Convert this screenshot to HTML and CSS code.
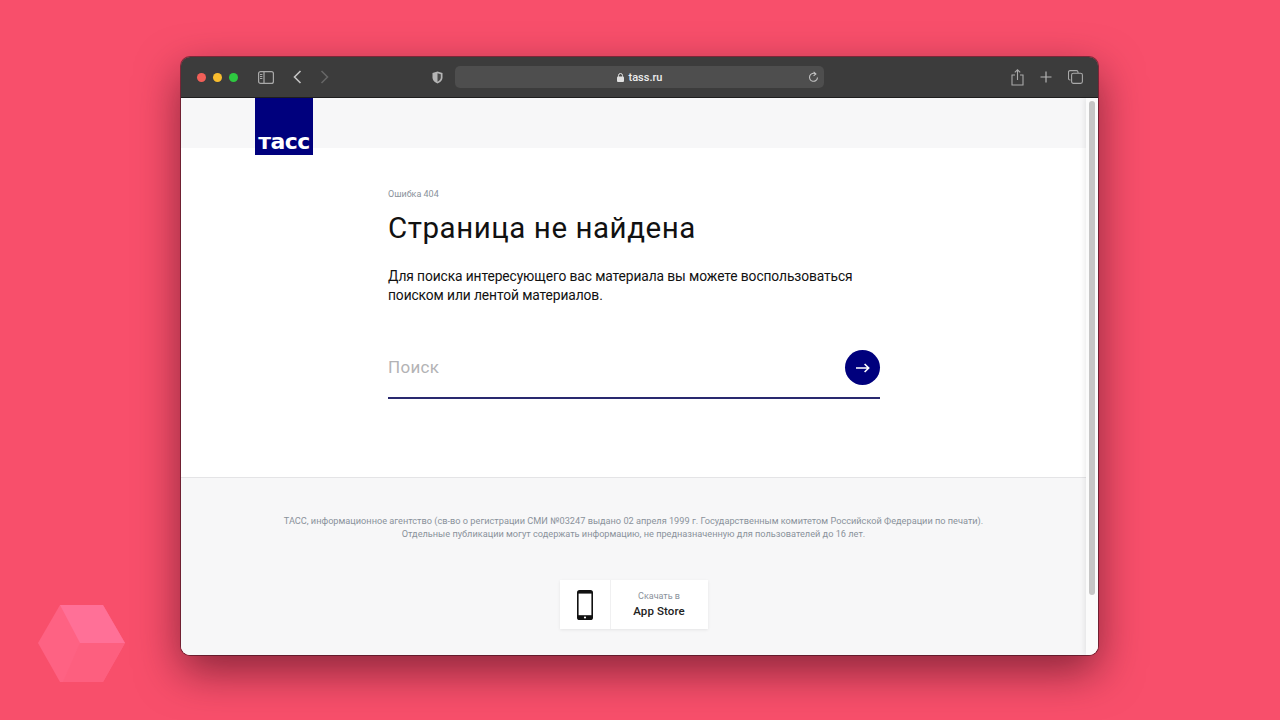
FILE: index.html
```html
<!DOCTYPE html>
<html lang="ru">
<head>
<meta charset="utf-8">
<title>tass.ru</title>
<link rel="stylesheet" href="styles.css">
</head>
<body>
	<!-- watermark -->
	<svg class="cube" width="88" height="78" viewBox="0 0 88 78">
		<polygon points="22,0 65,0 87,38 65,77 22,77 0,38" fill="#fe6283"/>
		<polygon points="22,0 65,0 87,38 42,38" fill="#ff7097"/>
		<polygon points="42,38 87,38 65,77 25,77" fill="#fd5f7f"/>
	</svg>

	<div class="window">
		<div class="toolbar">
			<div class="lights">
				<span class="light red"></span>
				<span class="light yellow"></span>
				<span class="light green"></span>
			</div>
			<svg class="tb_sidebar" width="16" height="13" viewBox="0 0 16 13" fill="none" stroke="#a9a9a9" stroke-width="1.2">
				<rect x="0.6" y="0.6" width="14.8" height="11.8" rx="2"/>
				<path d="M6 0.6V12.4"/>
				<path d="M2 3.5H4.4M2 5.5H4.4M2 7.5H4.4" stroke-width="1"/>
			</svg>
			<svg class="tb_back" width="9" height="14" viewBox="0 0 9 14" fill="none" stroke="#c4c4c4" stroke-width="1.6">
				<path d="M7.5 1L1.5 7L7.5 13"/>
			</svg>
			<svg class="tb_fwd" width="9" height="14" viewBox="0 0 9 14" fill="none" stroke="#666" stroke-width="1.6">
				<path d="M1.5 1L7.5 7L1.5 13"/>
			</svg>
			<svg class="tb_shield" width="11" height="13" viewBox="0 0 11 13">
				<path d="M5.5 0.5L10.5 2V6.5C10.5 9.5 8 11.6 5.5 12.5C3 11.6 0.5 9.5 0.5 6.5V2Z" fill="#b5b5b5"/>
				<path d="M5.5 2.2L8.8 3.2V6.5C8.8 8.5 7.2 10 5.5 10.7Z" fill="#4a4a4a"/>
			</svg>
			<div class="url_bar">
				<div class="url_text">
					<svg width="7" height="9" viewBox="0 0 7 9">
						<rect x="0" y="3.5" width="7" height="5.5" rx="1" fill="#e0e0e0"/>
						<path d="M1.5 3.8V2.5a2 2 0 0 1 4 0V3.8" fill="none" stroke="#e0e0e0"/>
					</svg>
					<span>tass.ru</span>
				</div>
				<svg class="reload" width="11" height="12" viewBox="0 0 11 12" fill="none" stroke="#c0c0c0" stroke-width="1.1">
					<path d="M7.6 2.9A4 4 0 1 0 9.5 6.5"/>
					<path d="M5.6 0.8L7.9 2.9L5.6 4.8"/>
				</svg>
			</div>
			<div class="tb_right">
				<svg width="13" height="17" viewBox="0 0 13 17" fill="none" stroke="#a9a9a9" stroke-width="1.1">
					<path d="M4 6H1V16H12V6H9"/>
					<path d="M6.5 11V1M3.8 3.4L6.5 0.8L9.2 3.4"/>
				</svg>
				<svg width="12" height="12" viewBox="0 0 12 12" stroke="#b5b5b5" stroke-width="1.2">
					<path d="M6 0.5V11.5M0.5 6H11.5"/>
				</svg>
				<svg width="15" height="14" viewBox="0 0 15 14" fill="none" stroke="#a9a9a9" stroke-width="1.1">
					<path d="M2.5 10H2a1.5 1.5 0 0 1-1.5-1.5V2A1.5 1.5 0 0 1 2 0.6H8.5A1.5 1.5 0 0 1 10 2V3"/>
					<rect x="3.6" y="3.2" width="10.8" height="10.2" rx="1.8"/>
				</svg>
			</div>
		</div>

		<div class="page">
			<div class="page_inner">
				<header class="top">
					<a class="logo">тасс</a>
				</header>
				<main class="content">
					<div class="err_label">Ошибка 404</div>
					<h1>Страница не найдена</h1>
					<p class="lead">Для поиска интересующего вас материала вы можете воспользоваться<br>поиском или лентой материалов.</p>
					<div class="search">
						<span class="search_ph">Поиск</span>
						<span class="search_btn">
							<svg width="14" height="10" viewBox="0 0 14 10" fill="none" stroke="#fff" stroke-width="1.6">
								<path d="M0 5H12.5M8.6 1L12.7 5L8.6 9"/>
							</svg>
						</span>
					</div>
				</main>
				<footer class="foot">
					<p class="legal">ТАСС, информационное агентство (св-во о регистрации СМИ №03247 выдано 02 апреля 1999 г. Государственным комитетом Российской Федерации по печати).<br>Отдельные публикации могут содержать информацию, не предназначенную для пользователей до 16 лет.</p>
					<div class="store">
						<span class="store_icon">
							<svg width="16" height="30" viewBox="0 0 16 30">
								<rect x="0" y="0" width="16" height="30" rx="2.6" fill="#111"/>
								<rect x="1.6" y="3.6" width="12.8" height="21.6" fill="#fff"/>
								<circle cx="8" cy="27.5" r="1.1" fill="#fff"/>
							</svg>
						</span>
						<span class="store_text">
							<span class="store_small">Скачать в</span>
							<span class="store_name">App Store</span>
						</span>
					</div>
				</footer>
			</div>
			<div class="scrollbar"><span class="thumb"></span></div>
		</div>
	</div>
</body>
</html>
```

FILE: styles.css
```css
* {
	box-sizing: border-box;
}

html, body {
	margin: 0;
	height: 100%;
}

body {
	position: relative;
	background-color: #f84f6b;
	font-family: Roboto, "Noto Sans", sans-serif;
	overflow: hidden;
	padding: 57px 0 0 181px;
}

.cube {
	position: absolute;
	left: 38px;
	top: 605px;
}

.window {
	width: 917px;
	height: 598px;
	border-radius: 9px;
	overflow: hidden;
	box-shadow: 0 16px 44px rgba(60, 10, 25, 0.6), 0 0 0 1px rgba(60, 20, 30, 0.6);
	display: flex;
	flex-direction: column;
}

/* toolbar */
.toolbar {
	height: 41px;
	flex: none;
	background-color: #3c3c3c;
	border-bottom: 1px solid #1e1e1e;
	display: flex;
	align-items: center;
	padding-left: 16px;
}

.lights {
	display: flex;
	gap: 7px;
}

.light {
	width: 9px;
	height: 9px;
	border-radius: 50%;
}

.red { background-color: #f25f58; }
.yellow { background-color: #f9bd2e; }
.green { background-color: #2ec840; }

.tb_sidebar { margin-left: 20px; }
.tb_back { margin-left: 19px; }
.tb_fwd { margin-left: 18px; }
.tb_shield { margin-left: 103px; }

.url_bar {
	width: 369px;
	height: 22px;
	margin-left: 12px;
	background-color: #4e4e4e;
	border-radius: 5px;
	position: relative;
	display: flex;
	align-items: center;
	justify-content: center;
}

.url_text {
	display: flex;
	align-items: center;
	gap: 5px;
	color: #ececec;
	font-size: 11px;
	font-weight: 500;
}

.reload {
	position: absolute;
	right: 5px;
	top: 5px;
}

.tb_right {
	display: flex;
	align-items: center;
	gap: 16px;
	margin-left: 187px;
}

/* page */
.page {
	flex: 1;
	min-height: 0;
	display: flex;
	background-color: #fff;
}

.page_inner {
	flex: 1;
	min-width: 0;
	display: flex;
	flex-direction: column;
}

.top {
	height: 50px;
	flex: none;
	background-color: #f7f7f8;
	padding-left: 74px;
}

.logo {
	display: flex;
	align-items: flex-end;
	justify-content: center;
	width: 58px;
	height: 57px;
	background-color: #00007d;
	color: #fff;
	font-family: "DejaVu Sans", sans-serif;
	font-weight: 700;
	font-size: 22px;
	line-height: 26px;
	letter-spacing: -0.6px;
	position: relative;
	z-index: 1;
}

.content {
	height: 330px;
	flex: none;
	padding: 39px 0 0 207px;
	border-bottom: 1px solid #e4e4e6;
}

.err_label {
	font-size: 9px;
	line-height: 14px;
	color: #8a929b;
}

h1 {
	margin: 8px 0 0;
	font-size: 29.5px;
	line-height: 38px;
	font-weight: 400;
	letter-spacing: 0.55px;
	color: #111;
}

.lead {
	margin: 20px 0 0;
	font-size: 13.8px;
	line-height: 19px;
	letter-spacing: -0.1px;
	color: #111;
}

.search {
	width: 492px;
	height: 49px;
	margin-top: 45px;
	border-bottom: 2px solid #29296f;
	display: flex;
	align-items: flex-start;
	justify-content: space-between;
}

.search_ph {
	margin-top: 5px;
	font-size: 17px;
	line-height: 24px;
	letter-spacing: 0.3px;
	color: #b3b3b5;
}

.search_btn {
	width: 35px;
	height: 35px;
	border-radius: 50%;
	background-color: #00007d;
	display: flex;
	align-items: center;
	justify-content: center;
}

.foot {
	flex: 1;
	min-height: 0;
	background-color: #f7f7f8;
	display: flex;
	flex-direction: column;
	align-items: center;
	padding-top: 36px;
}

.legal {
	margin: 0;
	font-size: 9.2px;
	line-height: 13px;
	text-align: center;
	color: #8a929b;
}

.store {
	margin-top: 40px;
	display: flex;
	height: 49px;
	background-color: #fff;
	box-shadow: 0 1px 3px rgba(0, 0, 0, 0.08);
}

.store_icon {
	width: 51px;
	display: flex;
	align-items: center;
	justify-content: center;
	border-right: 1px solid #f0f0f1;
}

.store_text {
	width: 97px;
	display: flex;
	flex-direction: column;
	align-items: center;
	justify-content: center;
	padding-bottom: 2px;
}

.store_small {
	font-size: 9px;
	line-height: 14px;
	color: #8a929b;
}

.store_name {
	font-size: 11.5px;
	line-height: 16px;
	font-weight: 500;
	color: #222;
	letter-spacing: 0.1px;
}

.scrollbar {
	width: 12px;
	flex: none;
	background-color: #fbfbfb;
	box-shadow: -2px 0 5px rgba(0, 0, 0, 0.07);
	padding: 3px 3px;
}

.thumb {
	display: block;
	width: 6px;
	height: 494px;
	border-radius: 3px;
	background-color: #c6c6c6;
}
```
